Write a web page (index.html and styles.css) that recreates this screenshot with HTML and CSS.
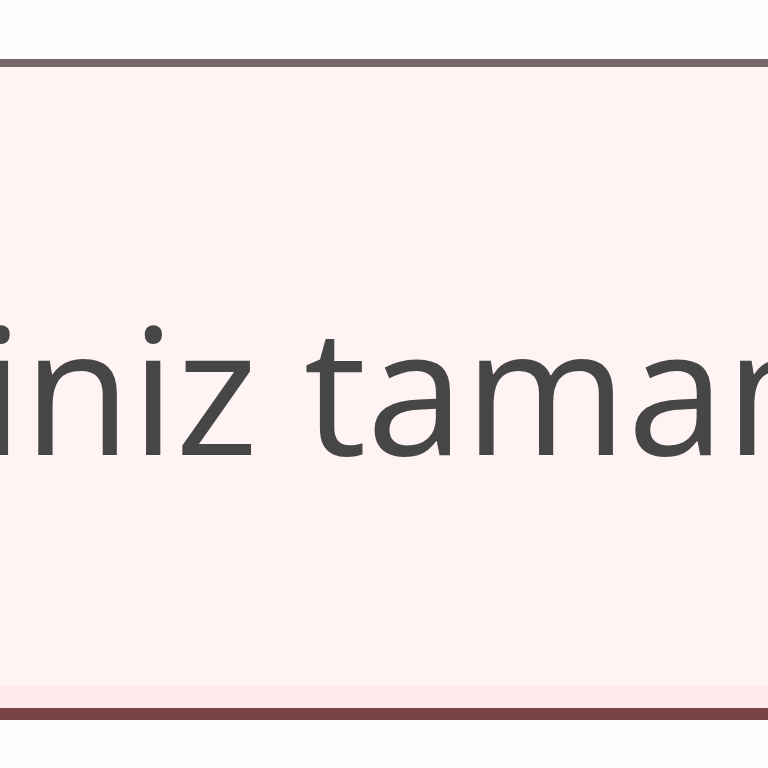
FILE: index.html
```html
<!DOCTYPE html>
<html lang="tr">
<head>
<meta charset="utf-8">
<title>Bildirim</title>
<link rel="stylesheet" href="styles.css">
</head>
<body>
<div class="alert" role="alert">
  <p class="alert-text">Bilgileriniz tamamlandı</p>
</div>
</body>
</html>
```
FILE: styles.css
```css
html, body {
  margin: 0;
  padding: 0;
  background: #fefefe;
  width: 768px;
  height: 768px;
  overflow: hidden;
}
.alert {
  margin-top: 59px;
  border-top: 8px solid #766868;
  border-bottom: 12px solid #7a4447;
  background: linear-gradient(to bottom, #fff3f3 0, #fff3f3 618px, #ffe9ea 620px, #ffe9ea 641px);
  padding: 195px 0 196px 0;
  overflow: hidden;
}
.alert-text {
  margin: 0 0 0 -579px;
  font-family: "Open Sans", "Noto Sans", sans-serif;
  font-size: 176px;
  line-height: 250px;
  height: 250px;
  color: #464646;
  white-space: nowrap;
}
```
